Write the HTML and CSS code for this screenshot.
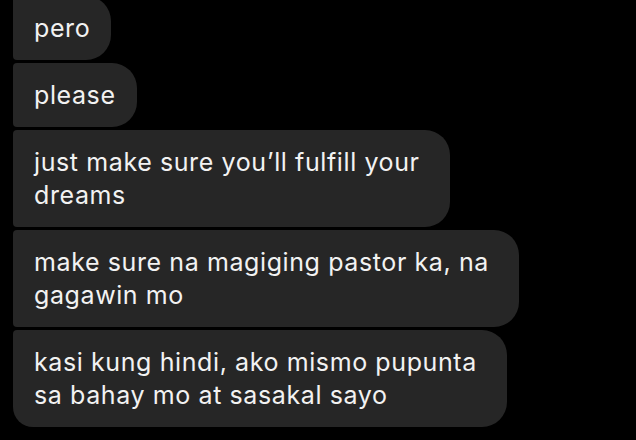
FILE: index.html
```html
<!DOCTYPE html>
<html>
<head>
<meta charset="utf-8">
<link rel="stylesheet" href="styles.css">
</head>
<body>
<div class="chat">
  <div class="bubble">pero</div>
  <div class="bubble">please</div>
  <div class="bubble multi">just make sure you’ll fulfill your<br>dreams</div>
  <div class="bubble multi">make sure na magiging pastor ka, na<br>gagawin mo</div>
  <div class="bubble multi last">kasi kung hindi, ako mismo pupunta<br>sa bahay mo at sasakal sayo</div>
</div>
</body>
</html>
```
FILE: styles.css
```css
html, body {
  margin: 0;
  padding: 0;
  background: #000;
}
body {
  width: 636px;
  height: 440px;
  overflow: hidden;
  font-family: Inter, "Noto Sans", sans-serif;
}
.chat {
  display: flex;
  flex-direction: column;
  align-items: flex-start;
  gap: 3px;
  margin-top: -4px;
  padding-left: 13px;
}
.bubble {
  background: #262626;
  color: #f2f2f2;
  font-size: 25px;
  letter-spacing: 0.6px;
  line-height: 33px;
  padding: 16px 21px 15px 21px;
  border-radius: 4px 25px 25px 4px;
  white-space: nowrap;
}
.bubble.multi {
  padding-right: 30px;
}
.bubble.last {
  border-bottom-left-radius: 20px;
}
```
